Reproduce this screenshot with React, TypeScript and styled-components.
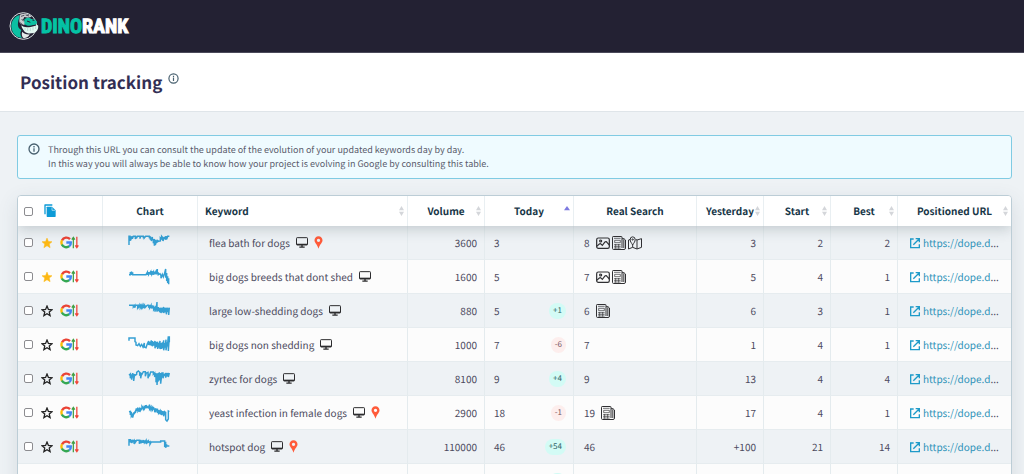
import React from 'react';
import styled, { createGlobalStyle } from 'styled-components';

const Global = createGlobalStyle`
  *, *::before, *::after { box-sizing: border-box; }
  body { margin: 0; background: #eef2f5; color: #4c4a5e; font-family: "Noto Sans CJK SC", "Noto Sans", sans-serif; font-size: 10px; text-rendering: geometricPrecision; }
  svg { display: block; flex: none; }
`;

const Page = styled.div`
  height: 100vh;
  overflow: hidden;
`;

const TopBar = styled.header`
  display: flex;
  align-items: center;
  height: 53px;
  padding: 0 9px;
  background: #232133;
  border-bottom: 1px solid #4b4a5a;
`;

const Brand = styled.a`
  display: flex;
  align-items: center;
  gap: 2px;
  color: #fff;
  text-decoration: none;
  font: bold 20px/28px "Liberation Sans Narrow", "Roboto Condensed", "Open Sans Condensed", "Noto Sans CJK SC", sans-serif;
  -webkit-text-stroke: 1px currentColor;
`;

const BrandAccent = styled.span`
  color: #04c3a5;
`;

const TitleBar = styled.div`
  display: flex;
  align-items: center;
  gap: 6px;
  height: 59px;
  padding: 0 20px;
  background: #fff;
  border-bottom: 1px solid #dfe5e9;
`;

const Title = styled.h1`
  margin: 0;
  color: #322e54;
  font-size: 17px;
  line-height: 26px;
`;

const InfoButton = styled.button`
  display: flex;
  align-self: flex-start;
  margin-top: 20px;
  padding: 0;
  border: 0;
  background: none;
  color: #48606f;
`;

const Content = styled.main`
  padding: 23px 12px 0 17px;
`;

const Notice = styled.section`
  display: flex;
  gap: 8px;
  padding: 7px 10px;
  border: 1px solid #80cbe3;
  border-radius: 3px;
  background: #effbff;
  color: #5a5c6c;
  font-size: 9px;
  line-height: 14px;
`;

const NoticeIcon = styled.span`
  color: #48606f;
`;

const NoticeText = styled.p`
  margin: 0;
`;

const Panel = styled.div`
  margin-top: 16px;
  border: 1px solid #bccdd6;
  border-radius: 4px;
  background: #fcfcfc;
  box-shadow: 0 6px 20px rgba(60, 80, 95, 0.13);
  overflow: hidden;
`;

const Table = styled.table`
  width: 100%;
  table-layout: fixed;
  border-collapse: separate;
  border-spacing: 0;
`;

const Col = styled.col<{ $w?: number }>`
  width: ${p => (p.$w ? `${p.$w}px` : 'auto')};
`;

const Head = styled.thead`
  position: relative;
  background: #fff;
  box-shadow: 0 3px 14px rgba(50, 70, 80, 0.24);
`;

const HeadCell = styled.th<{ $left?: number }>`
  height: 30px;
  padding: 0 3px 0 ${p => p.$left ?? 3}px;
  border-right: 1px solid #e9eff2;
  color: #173647;
  &:last-child { border-right: 0; }
`;

const HeadLayout = styled.div<{ $start?: boolean }>`
  display: grid;
  grid-template-columns: ${p => (p.$start ? '4px' : '1fr')} auto 1fr;
  align-items: center;
`;

const SortButton = styled.button`
  grid-column: 2;
  padding: 0;
  border: 0;
  background: none;
  color: inherit;
  font: inherit;
  font-weight: bold;
  line-height: 16px;
  text-rendering: inherit;
`;

const SortMark = styled.span`
  grid-column: 3;
  justify-self: end;
`;

const Row = styled.tr`
  background: #fcfcfc;
  &:nth-child(odd) { background: #eef2f5; }
`;

const Cell = styled.td<{ $align?: string; $left?: number }>`
  height: 34px;
  padding: 0 7px 0 ${p => p.$left ?? 6}px;
  border-right: 1px solid #e4ebee;
  border-bottom: 1px solid #e6ecef;
  text-align: ${p => p.$align ?? 'left'};
  white-space: nowrap;
  &:last-child { border-right: 0; }
`;

const Line = styled.div<{ $gap?: number; $between?: boolean }>`
  display: flex;
  align-items: center;
  justify-content: ${p => (p.$between ? 'space-between' : 'flex-start')};
  gap: ${p => p.$gap ?? 6}px;
`;

const Tick = styled.input`
  appearance: none;
  width: 9px;
  height: 9px;
  margin: 0 1px 0 0;
  border: 1px solid #8c8c90;
  border-radius: 2px;
  background: #fff;
`;

const IconButton = styled.button`
  display: flex;
  padding: 0;
  border: 0;
  background: none;
`;

const ChartBox = styled.div`
  display: flex;
  justify-content: center;
`;

const Badge = styled.span<{ $up: boolean }>`
  padding: 0 4px;
  border-radius: 8px;
  background: ${p => (p.$up ? '#d3fbf5' : '#fdeeed')};
  color: ${p => (p.$up ? '#35666a' : '#7a5560')};
  font-size: 8px;
  line-height: 16px;
`;

const UrlLink = styled.a`
  display: flex;
  align-items: center;
  gap: 2px;
  color: #2f93b9;
  text-decoration: none;
`;

const InfoIcon = ({ size }: { size: number }) => (
  <svg width={size} height={size} viewBox="0 0 24 24" fill="none" stroke="currentColor" strokeWidth="2.6" aria-hidden="true">
    <circle cx="12" cy="12" r="10" />
    <path d="M12 10.5V17.5M12 6.2V9" />
  </svg>
);

const Dino = () => (
  <svg width="30" height="28" viewBox="0 0 90 84" aria-hidden="true">
    <circle cx="43" cy="42" r="40" fill="#232133" stroke="#d9e2e2" strokeWidth="3" />
    <path d="M32 9C14 14 6 30 7 45c1 12 7 22 15 28 6 3 12 5 17 5-6-8-6-16-2-24-8-4-12-12-10-22 1-9 5-15 5-23Z" fill="#0cc0a2" />
    <path d="M33 8c10-5 26-3 35 6l-11 3-11-2-4 8 8 8-4 8-8-2c-6-2-8-8-7-14Z" fill="#c9cdd0" />
    <path d="M36 13 46 10M38 21l6 7M33 32l8 6M50 9l10 3" fill="none" stroke="#4b4b59" strokeWidth="3" />
    <path d="M46 22c6-7 16-6 21-1 9-1 16 3 17 10 0 6-6 9-12 8-10 4-20 3-26-4Z" fill="#0cc0a2" />
    <path d="M54 27 64 31M70 24l6 1" fill="none" stroke="#232133" strokeWidth="3" />
    <path d="M37 40c8 8 22 8 50-1 3 12-4 24-19 25-9 1-16-1-21-5-4-5-9-11-10-19Z" fill="#e3f8f1" />
    <path d="M48 46v9M56 48v9M64 47v10M72 45v10M80 43v8" fill="none" stroke="#a5cfc5" strokeWidth="2" />
    <path d="M40 59c5 6 13 9 22 8-2 6-9 11-18 12-6-5-7-13-4-20Z" fill="#e3e9e8" />
  </svg>
);

const CopyIcon = () => (
  <svg width="12" height="14" viewBox="0 0 36 42" fill="#0d9bd7" aria-hidden="true">
    <path d="M1 3Q1 1 3 1H25V5H5V31H1Z" />
    <path d="M8 10Q8 8 10 8H24L35 19V37Q35 39 33 39H10Q8 39 8 37Z" />
    <path d="M24 10V19H33" fill="none" stroke="#d6f0fb" strokeWidth="2" />
  </svg>
);

const Star = ({ on }: { on?: boolean }) => (
  <svg width="12" height="12" viewBox="0 0 24 24" fill={on ? '#fdb813' : 'none'} stroke={on ? '#fdb813' : '#222'} strokeWidth={on ? 1 : 2.6} aria-hidden="true">
    <path d="M12 2.2 14.8 9 22 9.5 16.5 14.2 18.2 21.3 12 17.5 5.8 21.3 7.5 14.2 2 9.5 9.2 9Z" />
  </svg>
);

const GoogleTrend = () => (
  <svg width="19" height="13" viewBox="0 0 57 39" fill="none" aria-hidden="true">
    <g strokeWidth="7">
      <path d="M30 9.5A15 15 0 0 0 6 13" stroke="#ea4335" />
      <path d="M6 12.5A15 15 0 0 0 6 26" stroke="#fbbc05" />
      <path d="M5.5 25.5A15 15 0 0 0 28 30.5" stroke="#34a853" />
      <path d="M19 19.5H32.5C33 25 30.5 29 27.5 31" stroke="#4285f4" />
    </g>
    <g strokeWidth="3.8">
      <path d="M40 37V5M35.5 11 40 4 44.5 11" stroke="#43a047" />
      <path d="M50.5 2V34M46 28 50.5 35 55 28" stroke="#f04438" />
    </g>
  </svg>
);

const Monitor = () => (
  <svg width="12" height="11" viewBox="0 0 36 33" fill="none" stroke="#2c2c2e" aria-hidden="true">
    <rect x="1.5" y="2" width="33" height="22" rx="2" strokeWidth="3" />
    <path d="M2 22H34" strokeWidth="4" />
    <path d="M18 24V30M10 30.5H26" strokeWidth="4" />
  </svg>
);

const Pin = () => (
  <svg width="9" height="13" viewBox="0 0 27 39" aria-hidden="true">
    <path fillRule="evenodd" fill="#ff5b3a" d="M13.5 1C6.5 1 1.5 6 1.5 13 1.5 21 9 24 13.5 38 18 24 25.5 21 25.5 13 25.5 6 20.5 1 13.5 1ZM13.5 8a5 5 0 1 1 0 10 5 5 0 0 1 0-10Z" />
  </svg>
);

const ImageIcon = () => (
  <svg width="14" height="14" viewBox="0 0 42 42" fill="none" stroke="#303033" strokeWidth="3.6" aria-hidden="true">
    <rect x="2" y="6" width="38" height="31" rx="5" />
    <circle cx="14" cy="15" r="3" />
    <path d="M2 31 10 24Q13 22 16 25L19 28 27 18Q30 15 33 19L40 27" />
  </svg>
);

const NewsIcon = () => (
  <svg width="14" height="14" viewBox="0 0 42 42" fill="none" stroke="#303033" strokeWidth="3" aria-hidden="true">
    <path d="M30 36V3Q30 1.5 28 1.5H3.5Q1.5 1.5 1.5 4V37Q1.5 40.5 5 40.5H36Q40.5 40.5 40.5 36V12L36 8H30M35.5 10V36" />
    <path d="M6 7H26M8 13H25V20H8ZM6 26H26M6 31H26M6 36H26M11 24V38M20 24V38" strokeWidth="2" />
  </svg>
);

const MapIcon = () => (
  <svg width="14" height="14" viewBox="0 0 42 42" fill="none" stroke="#303033" strokeWidth="3" aria-hidden="true">
    <path d="M7 10 1.5 12V39L14 34 27 39 40.5 34V8L27 12 23 10M14 27V34M27 12V39" />
    <path d="M14 27C10 20 6.5 17 6.5 11A7.5 8.5 0 0 1 21.5 11C21.5 17 18 20 14 27Z" />
    <circle cx="14" cy="10.5" r="2" />
  </svg>
);

const ExternalIcon = () => (
  <svg width="12" height="12" viewBox="0 0 36 36" fill="none" stroke="#1f9bc9" strokeWidth="4" aria-hidden="true">
    <path d="M14 6H5V32H31V22M20 5H31V16M31 5 13 23" />
  </svg>
);

const SortIcon = ({ active }: { active?: boolean }) => (
  <svg width={active ? 6 : 5} height="10" viewBox={active ? '0 0 18 30' : '0 0 15 30'} aria-hidden="true">
    {active ? (
      <path d="M9 0 18 13H0Z" fill="#7d7ae0" />
    ) : (
      <path d="M7.5 0 15 13H0ZM7.5 30 0 17H15Z" fill="#d4d6da" />
    )}
  </svg>
);

const Spark = ({ d }: { d: string }) => (
  <svg width="43" height="20" viewBox="0 0 129 60" fill="none" stroke="#349fd3" strokeWidth="4.4" aria-hidden="true">
    <path d={d} />
  </svg>
);

type Serp = 'image' | 'news' | 'map';
type Entry = {
  keyword: string; starred?: boolean; pin?: boolean; volume: string; today: string; delta?: string;
  real: string; serp?: Serp[]; yesterday: string; start: string; best: string; spark: string;
};

const entries: Entry[] = [
  { keyword: 'flea bath for dogs', starred: true, pin: true, volume: '3600', today: '3', real: '8', serp: ['image', 'news', 'map'], yesterday: '3', start: '2', best: '2',
    spark: 'M3 36V10H6V24L8 12V22L10 10V18L13 10V17L16 10H22V18L25 10V16L28 10H36V17L38 10H46V16L49 10V15L53 10H64V16L67 10V20L70 14V24L73 12V18L76 22V31L79 18V38L82 20V36L85 22V30L88 20V28L91 22V25L97 24V14L101 18V10L105 15V24L109 12V18L113 10V20L116 10V19L119 10H124' },
  { keyword: 'big dogs breeds that dont shed', starred: true, volume: '1600', today: '5', real: '7', serp: ['image', 'news'], yesterday: '5', start: '4', best: '1',
    spark: 'M3 23H7V15V23L11 14V23L14 16V23H54L58 16V23L62 15V23L68 14V23L72 12V22L76 15V23L80 14V22L84 13L86 22L88 6V22L91 16V23L96 20L99 26V34L103 22L106 30L109 22L113 6V32L116 18V42L119 28V48L122 34V52' },
  { keyword: 'large low-shedding dogs', volume: '880', today: '5', delta: '+1', real: '6', serp: ['news'], yesterday: '6', start: '3', best: '1',
    spark: 'M3 13H16V18L20 13V20L23 13H29V20L33 13V18L37 13V20L41 13V20L45 13V19L49 13V22L53 13V18L58 13H62V20L65 12V20L69 13V22L73 13V22L77 14V26L81 20V32L84 16V28L87 3V32L91 18V30L95 20V34L99 20V36L103 20V34L107 18V36L111 20V34L115 20V40L119 20V32L122 22V42L124 20' },
  { keyword: 'big dogs non shedding', volume: '1000', today: '7', delta: '-6', real: '7', yesterday: '1', start: '4', best: '1',
    spark: 'M3 17V9H21V20L24 22V30L29 32L33 26L37 34L41 28L45 36L49 24V36L54 38L58 26L62 18V30L66 20V30L70 16V32L73 18V34L77 20V32L81 18V40L85 20V36L89 20V42L92 24V38L96 18V42L100 24V42L103 22V40L107 16V46L111 24V38L114 14V46L118 22V34L121 4V48L124 4V22' },
  { keyword: 'zyrtec for dogs', volume: '8100', today: '9', delta: '+4', real: '9', yesterday: '13', start: '4', best: '4',
    spark: 'M3 19L7 15V28L11 16V32L14 12V26L17 14V36L20 15V20L26 16V10L31 6L35 10V20L38 10V28L41 12V18L46 8H52V22L55 12L60 10V28L64 14V22L68 9H76V16L80 12V24L84 12V40L87 14V48L90 12V38L94 10V34L98 12V44L102 10V24L105 10V28L109 14V20L113 12V26L117 12V22L121 12V24L124 12' },
  { keyword: 'yeast infection in female dogs', pin: true, volume: '2900', today: '18', delta: '-1', real: '19', serp: ['news'], yesterday: '17', start: '4', best: '1',
    spark: 'M3 26L7 25V36L10 26V40L14 34V44L18 28V34L22 24V30L25 16V24L30 14V24L34 18V26L38 14V22L42 16V10L46 16V22L49 8V18L53 12V6L57 16V10L61 14L65 5V18L69 12V20L73 14V22L76 18V12L80 20V28L84 16V24L88 20V30L92 20V30L96 24V34L100 22V36L104 24V32L107 28V40L110 24V36L113 26V50L117 54L121 48V24L124 26' },
  { keyword: 'hotspot dog', pin: true, volume: '110000', today: '46', delta: '+54', real: '46', yesterday: '+100', start: '21', best: '14',
    spark: 'M3 26V8H7V16L10 8V18L14 8V14L18 10V20L22 9V16L26 10H34V20L38 8V19L42 10V17L46 9V18L50 10V16L54 10V20L57 10V17L61 12V16L66 14V22L70 15H98V12H110V30L113 14V32L116 22V27H124' },
  { keyword: '', volume: '', today: '', delta: '+1', real: '', yesterday: '', start: '', best: '', spark: '' },
];

const serpIcons = { image: ImageIcon, news: NewsIcon, map: MapIcon };

const SortHead = ({ label, start, active, plain }: { label: string; start?: boolean; active?: boolean; plain?: boolean }) => (
  <HeadCell scope="col">
    <HeadLayout $start={start}>
      <SortButton type="button">{label}</SortButton>
      {!plain && <SortMark><SortIcon active={active} /></SortMark>}
    </HeadLayout>
  </HeadCell>
);

const EntryRow = ({ e }: { e: Entry }) => (
  <Row>
    <Cell>
      <Line $gap={7}>
        <Tick type="checkbox" aria-label={`Select ${e.keyword}`} />
        <IconButton type="button" aria-label="Favourite"><Star on={e.starred} /></IconButton>
        <IconButton type="button" aria-label="Google results"><GoogleTrend /></IconButton>
      </Line>
    </Cell>
    <Cell><ChartBox><Spark d={e.spark} /></ChartBox></Cell>
    <Cell $left={11}>
      <Line>
        {e.keyword}
        <Monitor />
        {e.pin && <Pin />}
      </Line>
    </Cell>
    <Cell $align="right">{e.volume}</Cell>
    <Cell $left={9}>
      <Line $between>
        <span>{e.today}</span>
        {e.delta && <Badge $up={e.delta.startsWith('+')}>{e.delta}</Badge>}
      </Line>
    </Cell>
    <Cell $left={10}>
      <Line>
        {e.real}
        {e.serp && (
          <Line $gap={2}>
            {e.serp.map(s => {
              const Icon = serpIcons[s];
              return <Icon key={s} />;
            })}
          </Line>
        )}
      </Line>
    </Cell>
    <Cell $align="right">{e.yesterday}</Cell>
    <Cell $align="right">{e.start}</Cell>
    <Cell $align="right">{e.best}</Cell>
    <Cell $left={11}>
      {e.keyword && (
        <Line $gap={0}>
          <UrlLink href="#"><ExternalIcon />https://dope.d</UrlLink>
          <span>...</span>
        </Line>
      )}
    </Cell>
  </Row>
);

export default function App() {
  return (
    <Page>
      <Global />
      <TopBar>
        <Brand href="#">
          <Dino />
          <span><BrandAccent>DINO</BrandAccent>RANK</span>
        </Brand>
      </TopBar>
      <TitleBar>
        <Title>Position tracking</Title>
        <InfoButton type="button" aria-label="About position tracking"><InfoIcon size={11} /></InfoButton>
      </TitleBar>
      <Content>
        <Notice>
          <NoticeIcon><InfoIcon size={12} /></NoticeIcon>
          <NoticeText>
            Through this URL you can consult the update of the evolution of your updated keywords day by day.<br />
            In this way you will always be able to know how your project is evolving in Google by consulting this table.
          </NoticeText>
        </Notice>
        <Panel>
          <Table>
            <colgroup>
              <Col $w={85} /><Col $w={95} /><Col /><Col $w={77} /><Col $w={89} />
              <Col $w={123} /><Col $w={67} /><Col $w={67} /><Col $w={67} /><Col $w={113} />
            </colgroup>
            <Head>
              <tr>
                <HeadCell scope="col" $left={6}>
                  <Line $gap={10}>
                    <Tick type="checkbox" aria-label="Select all" />
                    <IconButton type="button" aria-label="Copy"><CopyIcon /></IconButton>
                  </Line>
                </HeadCell>
                <SortHead label="Chart" plain />
                <SortHead label="Keyword" start />
                <SortHead label="Volume" />
                <SortHead label="Today" active />
                <SortHead label="Real Search" plain />
                <SortHead label="Yesterday" />
                <SortHead label="Start" />
                <SortHead label="Best" />
                <SortHead label="Positioned URL" />
              </tr>
            </Head>
            <tbody>
              {entries.map(e => <EntryRow key={e.keyword} e={e} />)}
            </tbody>
          </Table>
        </Panel>
      </Content>
    </Page>
  );
}
